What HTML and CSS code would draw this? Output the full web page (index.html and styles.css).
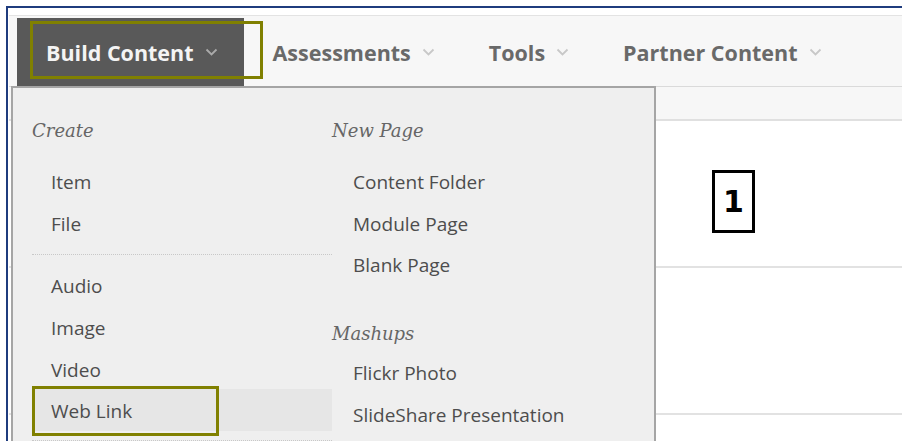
FILE: index.html
```html
<!DOCTYPE html>
<html lang="en">
<head>
<meta charset="utf-8">
<title>Build Content</title>
<link rel="stylesheet" href="styles.css">
</head>
<body>
<div class="frame">
  <nav class="tabs">
    <div class="tab tab-active">
      Build Content
      <svg class="chev" viewBox="0 0 13 8"><polyline points="1.5,1.5 6.5,6.5 11.5,1.5"/></svg>
      <span class="callout callout-tab"></span>
    </div>
    <div class="tab">
      Assessments
      <svg class="chev" viewBox="0 0 13 8"><polyline points="1.5,1.5 6.5,6.5 11.5,1.5"/></svg>
    </div>
    <div class="tab">
      Tools
      <svg class="chev" viewBox="0 0 13 8"><polyline points="1.5,1.5 6.5,6.5 11.5,1.5"/></svg>
    </div>
    <div class="tab">
      Partner Content
      <svg class="chev" viewBox="0 0 13 8"><polyline points="1.5,1.5 6.5,6.5 11.5,1.5"/></svg>
    </div>
  </nav>

  <div class="subbar"></div>
  <div class="row"><span class="step">1</span></div>
  <div class="row"></div>
  <div class="row"></div>

  <div class="dropdown">
    <div class="col col-left">
      <div class="menu-head">Create</div>
      <ul class="menu-list">
        <li>Item</li>
        <li>File</li>
      </ul>
      <hr class="sep">
      <ul class="menu-list">
        <li>Audio</li>
        <li>Image</li>
        <li>Video</li>
        <li class="is-hover">Web Link<span class="callout callout-link"></span></li>
      </ul>
      <hr class="sep sep-end">
    </div>
    <div class="col col-right">
      <div class="group">
        <div class="menu-head">New Page</div>
        <ul class="menu-list">
          <li>Content Folder</li>
          <li>Module Page</li>
          <li>Blank Page</li>
        </ul>
      </div>
      <div class="group group-mashups">
        <div class="menu-head">Mashups</div>
        <ul class="menu-list">
          <li>Flickr Photo</li>
          <li>SlideShare Presentation</li>
        </ul>
      </div>
    </div>
  </div>
</div>
</body>
</html>
```

FILE: styles.css
```css
html, body {
  margin: 0;
  background: #ffffff;
  overflow: hidden;
}

body {
  font-family: "Open Sans", "DejaVu Sans", sans-serif;
}

/* outer page frame with the navy top/left edge */
.frame {
  position: relative;
  margin: 6px 0 0 6px;
  height: 435px;
  box-sizing: border-box;
  border-top: 2px solid #1f3c7e;
  border-left: 2px solid #1f3c7e;
  padding: 7px 0 0 1px;
  overflow: hidden;
}

/* top navigation tabs */
.tabs {
  display: flex;
  padding: 2px 0 0 8px;
  background: #f7f7f7;
  border-top: 1px solid #e3e3e3;
  border-bottom: 1px solid #dadada;
}

.tab {
  position: relative;
  display: flex;
  align-items: center;
  height: 68px;
  padding: 0 25px 0 29px;
  font-size: 21.5px;
  font-weight: 700;
  color: #696969;
  white-space: nowrap;
}

.tab-active {
  background: #595959;
  color: #f4f4f4;
  padding-right: 26px;
}

.chev {
  width: 13px;
  height: 8px;
  margin-left: 11px;
  fill: none;
  stroke: #c8c8c8;
  stroke-width: 1.8;
}

.tab-active .chev {
  stroke: #aaaaaa;
}

/* highlight rectangles */
.callout {
  position: absolute;
  box-sizing: border-box;
  border: 3px solid #808000;
  pointer-events: none;
}

.callout-tab {
  left: 13px;
  top: 3px;
  width: 233px;
  height: 58px;
}

.callout-link {
  left: 0;
  top: -3px;
  width: 187px;
  height: 50px;
}

/* page body behind the menu */
.subbar {
  height: 32px;
  background: #f7f7f7;
  border-bottom: 2px solid #e0e0e0;
}

.row {
  position: relative;
  height: 145px;
  border-bottom: 2px solid #e2e2e2;
}

.step {
  position: absolute;
  left: 703px;
  top: 49px;
  width: 43px;
  height: 63px;
  box-sizing: border-box;
  border: 3px solid #000000;
  background: #ffffff;
  display: flex;
  align-items: center;
  justify-content: center;
  font-family: "DejaVu Sans", sans-serif;
  font-weight: 700;
  font-size: 30px;
  color: #000000;
}

/* dropdown menu */
.dropdown {
  position: absolute;
  left: 3px;
  top: 78px;
  width: 645px;
  height: 420px;
  box-sizing: border-box;
  display: flex;
  padding: 31px 0 0 19px;
  background: #efefef;
  border: 2px solid #a5a5a5;
  border-bottom: none;
}

.col-left {
  width: 300px;
}

.col-right {
  flex: 1;
}

.menu-head {
  font-family: "DejaVu Serif", serif;
  font-style: italic;
  font-size: 18px;
  line-height: 24px;
  color: #666666;
  margin: 0 0 17px;
}

.group-mashups .menu-head {
  margin: 37px 0 5.5px;
}

.menu-list {
  list-style: none;
  margin: 0;
  padding: 0;
}

.menu-list li {
  position: relative;
  height: 41.67px;
  line-height: 44px;
  padding-left: 19px;
  font-size: 19px;
  color: #4d4d4d;
  white-space: nowrap;
}

.col-right .menu-list li {
  padding-left: 21px;
}

.menu-list li.is-hover {
  background: #e6e6e6;
}

.sep {
  height: 0;
  border: 0;
  border-top: 1px dotted #c8c8c8;
  margin: 11px 0 9px;
}

.sep-end {
  margin-top: 9px;
}
```
